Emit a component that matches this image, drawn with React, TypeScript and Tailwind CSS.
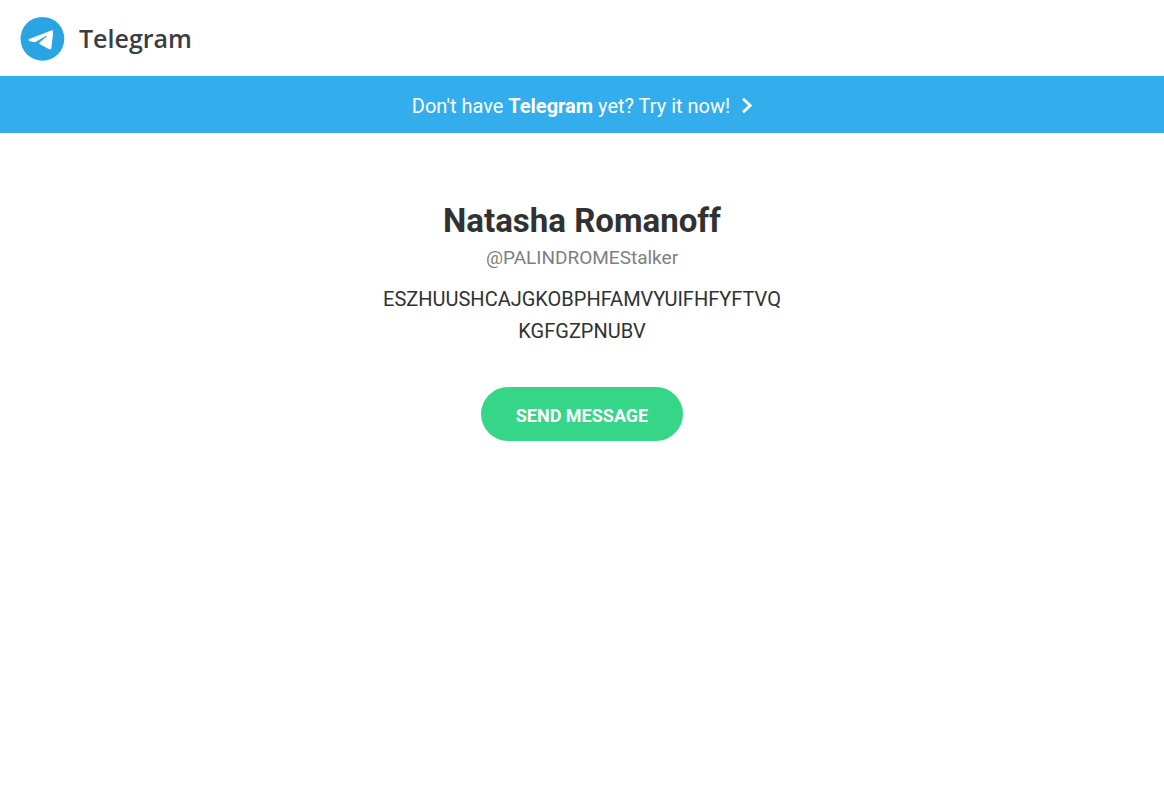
export default function App() {
  return (
    <div className="min-h-screen bg-white font-['Roboto',sans-serif] text-[#303232]">
      <header className="flex h-[76px] items-center px-5">
        <a href="#" className="flex items-center gap-[14px]">
          <svg className="size-[45px]" viewBox="0 0 45 45" aria-hidden="true">
            <circle cx="22.4" cy="22.8" r="21.9" fill="#2aa5e3" />
            <path
              d="M9.9 22.8 L31.2 14.4 Q33.4 13.7 33.2 15.9 L31.4 31.8 Q31 34.2 28.7 33 L19.6 28 Q18.8 27.3 19.4 26.7 L26.8 20.3 Q26.6 19.7 25.8 20.1 L16 25.8 Q15 26.3 13.8 26.1 L9.8 25.2 Q7.2 24 9.9 22.8 Z"
              fill="#fff"
            />
          </svg>
          <span className="pt-0.5 font-['Open_Sans',sans-serif] text-[25px] font-semibold text-[#3a3d42]">Telegram</span>
        </a>
      </header>
      <a href="#" className="flex h-[57px] items-center justify-center gap-3 bg-[#34adec] pt-0.5 text-[20px] text-white">
        <span>
          Don't have <strong className="font-bold">Telegram</strong> yet? Try it now!
        </span>
        <svg className="h-4 w-[10px]" viewBox="0 0 10 16" fill="none" stroke="#fff" strokeWidth="2.8" aria-hidden="true">
          <path d="M1 0.8 L8.2 7.5 L1 14.2" />
        </svg>
      </a>
      <main className="flex flex-col items-center px-4 pt-16 text-center">
        <h1 className="text-[33px] leading-[48px] font-bold">Natasha Romanoff</h1>
        <p className="text-[19px] leading-[26px] text-[#7d7f81]">@PALINDROMEStalker</p>
        <p className="mt-3 max-w-[410px] text-[20px] leading-8 break-all">
          ESZHUUSHCAJGKOBPHFAMVYUIFHFYFTVQKGFGZPNUBV
        </p>
        <a href="#" className="mt-10 flex h-[54px] items-center rounded-full bg-[#35d687] px-[35px] pt-0.5 text-[18px] font-bold text-white uppercase">
          Send Message
        </a>
      </main>
    </div>
  );
}
